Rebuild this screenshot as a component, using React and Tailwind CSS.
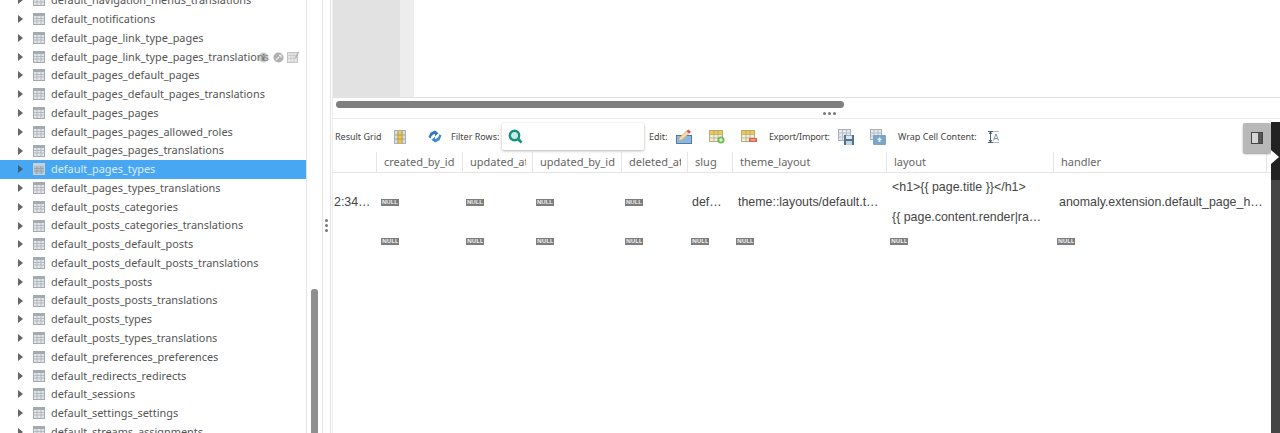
import React from 'react';

const tables = [
  'default_navigation_menus_translations', 'default_notifications', 'default_page_link_type_pages',
  'default_page_link_type_pages_translations', 'default_pages_default_pages', 'default_pages_default_pages_translations',
  'default_pages_pages', 'default_pages_pages_allowed_roles', 'default_pages_pages_translations', 'default_pages_types',
  'default_pages_types_translations', 'default_posts_categories', 'default_posts_categories_translations',
  'default_posts_default_posts', 'default_posts_default_posts_translations', 'default_posts_posts',
  'default_posts_posts_translations', 'default_posts_types', 'default_posts_types_translations',
  'default_preferences_preferences', 'default_redirects_redirects', 'default_sessions', 'default_settings_settings',
  'default_streams_assignments',
];

const columns = [
  { name: '', w: 'w-[44px]' },
  { name: 'created_by_id', w: 'w-[86px]' },
  { name: 'updated_at', w: 'w-[70px]' },
  { name: 'updated_by_id', w: 'w-[89px]' },
  { name: 'deleted_at', w: 'w-[66px]' },
  { name: 'slug', w: 'w-[45px]' },
  { name: 'theme_layout', w: 'w-[154px]' },
  { name: 'layout', w: 'w-[167px]' },
  { name: 'handler', w: 'w-[213px]' },
];

const TableIcon = ({ selected }) => (
  <svg width="12" height="12" viewBox="0 0 12 12" className="shrink-0">
    <rect width="12" height="12" fill={selected ? '#c5d2db' : '#a3aab0'} />
    <rect x="1" y="3" width="10" height="8" fill={selected ? '#b6c2cb' : '#e2e5e8'} />
    <path d="M1 5.500h10M1 8h10M4 3v8M8 3v8" stroke={selected ? '#8a9aa6' : '#a3aab0'} strokeWidth="0.7" />
  </svg>
);

const Row = ({ name, selected, hovered }) => (
  <div className={`flex items-center h-[18.78px] relative ${selected ? 'bg-[#48a7f2] text-[#dcecf9]' : 'text-[#555]'}`}>
    <span className={`ml-[18px] w-0 h-0 border-y-[4px] border-y-transparent border-l-[5px] ${selected ? 'border-l-[#3d5f78]' : 'border-l-[#666]'}`} />
    <span className="ml-[10px]"><TableIcon selected={selected} /></span>
    <span className="ml-[6px] whitespace-nowrap">{name}</span>
    {hovered && (
      <span className="absolute left-[258px] top-[4px] flex items-center">
        <svg width="11" height="11" viewBox="0 0 11 11"><circle cx="5.500" cy="5.500" r="5" fill="#aaa" opacity="0.6" /><rect x="4.500" y="4.500" width="2" height="4" fill="#777" /><rect x="4.500" y="2" width="2" height="1.500" fill="#777" /></svg>
        <svg width="11" height="11" viewBox="0 0 11 11" className="ml-[4px]"><circle cx="5.500" cy="5.500" r="5" fill="#b0b0b0" /><path d="M3 8l3-3M6 3.500h2v2" stroke="#eee" strokeWidth="1.300" fill="none" /></svg>
        <svg width="13" height="12" viewBox="0 0 13 12" className="ml-[3px]"><rect x="0.500" y="1.500" width="10" height="10" fill="#e6e6e6" stroke="#c4c4c4" /><path d="M1 4.500h9M1 7.500h9M4 2v9M7 2v9" stroke="#c4c4c4" strokeWidth="0.700" /><path d="M8.500 7l3-6" stroke="#b4b4b4" strokeWidth="1.500" /></svg>
      </span>
    )}
  </div>
);

const Null = () => (
  <span className="inline-flex items-center justify-center w-[18px] h-[7px] bg-[#7d7d7d] text-[#eee] text-[6px] leading-none font-bold">NULL</span>
);

const TBtn = ({ children, className }) => <span className={`shrink-0 flex items-center ${className}`}>{children}</span>;

const YellowGrid = () => (
  <>
    <rect x="0.500" y="0.500" width="13" height="11" fill="#f0efe6" stroke="#b8ab73" />
    <rect x="1" y="1" width="12" height="3.500" fill="#edc94f" />
    <path d="M1 4.500h12M1 8h12M5 1v10M9 1v10" stroke="#b8ab73" strokeWidth="0.800" />
  </>
);

const Toolbar = () => (
  <div className="h-[33px] pt-[2px] flex items-center text-[9px] text-[#444] relative whitespace-nowrap">
    <span className="ml-[2px] w-[47px]">Result Grid</span>
    <TBtn className="ml-[12px]">
      <svg width="12" height="14" viewBox="0 0 12 14"><rect x="0.500" y="0.500" width="11" height="13" fill="#d9dce0" stroke="#aab0b5" /><rect x="3.500" y="1" width="5" height="12" fill="#efc93f" /><path d="M4 1v12M8 1v12M1 5h10M1 9h10" stroke="#a09a70" strokeWidth="0.800" /></svg>
    </TBtn>
    <TBtn className="ml-[22px]">
      <svg width="14" height="13" viewBox="0 0 14 13"><path d="M7 .5L2.500 2.800 .5 7l2.200 1.500C3 6 4.500 4.300 7 4v2.200l3.500-3L7 .5z" fill="#2f76bd" /><path d="M13.500 5.500L11.300 4.200C11 6.800 9.500 8.700 7 9V6.800l-3.500 3L7 12.500l4.500-2.200 2-4.800z" fill="#3d8bd0" /></svg>
    </TBtn>
    <span className="ml-[9px] w-[49px]">Filter Rows:</span>
    <div className="ml-[2px] w-[142px] h-[27px] bg-white rounded-[2px] shadow-[0_1px_3px_rgba(0,0,0,0.3)] flex items-center">
      <svg width="15" height="15" viewBox="0 0 15 15" className="ml-[6px]"><circle cx="6.500" cy="6.500" r="4.700" fill="#c9ebe6" stroke="#17907f" strokeWidth="2.400" /><path d="M10 10l3.500 3.500" stroke="#17907f" strokeWidth="2.600" /></svg>
    </div>
    <span className="ml-[5px] w-[18px]">Edit:</span>
    <TBtn className="ml-[9px]">
      <svg width="16" height="15" viewBox="0 0 16 15"><rect x="0.500" y="6.500" width="15" height="8" fill="#8db8de" stroke="#4b7cab" /><path d="M2.500 12l1-3.500L10.500 2l2.500 2.500-7 6.500z" fill="#f3d9a8" stroke="#b89060" strokeWidth="0.500" /><path d="M10.500 2L12.500 .5 15 3l-2 1.500z" fill="#d9534f" /></svg>
    </TBtn>
    <TBtn className="ml-[17px]">
      <svg width="16" height="14" viewBox="0 0 16 14"><YellowGrid /><circle cx="12" cy="10" r="3.500" fill="#6dbb55" /><path d="M10 10h4M12 8v4" stroke="#fff" strokeWidth="1" /></svg>
    </TBtn>
    <TBtn className="ml-[16px]">
      <svg width="16" height="14" viewBox="0 0 16 14"><YellowGrid /><rect x="8" y="8" width="8" height="4" fill="#d9634a" /><rect x="9.500" y="9.500" width="5" height="1" fill="#f5d5cc" /></svg>
    </TBtn>
    <span className="ml-[12px] w-[60px] tracking-[-0.15px]">Export/Import:</span>
    <TBtn className="ml-[9px]">
      <svg width="16" height="16" viewBox="0 0 16 16"><rect x="0.500" y="0.500" width="12" height="11" fill="#e4e8ec" stroke="#a9b1b8" /><path d="M1 4h11M1 8h11M4.500 1v10M8.500 1v10" stroke="#a9b1b8" strokeWidth="0.700" /><rect x="6" y="6" width="10" height="10" fill="#4f7492" /><rect x="8" y="6.500" width="6" height="3.500" fill="#dfe8f0" /><rect x="8" y="12" width="6" height="4" fill="#c5d3df" /></svg>
    </TBtn>
    <TBtn className="ml-[16px]">
      <svg width="16" height="16" viewBox="0 0 16 16"><rect x="0.500" y="0.500" width="11" height="10" fill="#e4e8ec" stroke="#a9b1b8" /><path d="M1 4h10M1 7h10M4 1v9M8 1v9" stroke="#a9b1b8" strokeWidth="0.700" /><rect x="3" y="6" width="13" height="10" rx="1" fill="#7ba6c9" /><path d="M9.500 8l2.500 3h-5zM8.500 11v2h2v-2" fill="#dfeaf3" /></svg>
    </TBtn>
    <span className="ml-[12px] w-[79px]">Wrap Cell Content:</span>
    <TBtn className="ml-[11px]">
      <svg width="11" height="12" viewBox="0 0 11 12"><path d="M0 .5h5M0 11.500h5M2.500 1v10M1 3l1.500-2L4 3M1 9l1.500 2L4 9" stroke="#2f3a44" fill="none" strokeWidth="0.800" /><path d="M5 .5h6M5 11.500h6" stroke="#7f8b95" fill="none" strokeWidth="0.600" /><path d="M5.500 9.500L8 3l2.500 6.500M6.500 7.500h3" stroke="#5a7a96" fill="none" strokeWidth="0.800" /></svg>
    </TBtn>
    <div className="absolute left-[910px] top-[4px] w-[28px] h-[30px] bg-[#b8b8b8] rounded-[2px] shadow-[0_1px_2px_rgba(0,0,0,0.4)] flex items-center justify-center">
      <svg width="12" height="12" viewBox="0 0 12 12"><rect x="0.500" y="0.500" width="11" height="11" fill="#d4d4d4" stroke="#444" /><rect x="7" y="1" width="4" height="10" fill="#555" /></svg>
    </div>
  </div>
);

const Cell = ({ w, children, className = '' }) => (
  <div className={`${w} shrink-0 px-[5px] flex items-center overflow-hidden ${className}`}>{children}</div>
);

const Dots = () => (
  <>
    <span className="w-[3px] h-[3px] rounded-full bg-[#777]" />
    <span className="w-[3px] h-[3px] rounded-full bg-[#777]" />
    <span className="w-[3px] h-[3px] rounded-full bg-[#777]" />
  </>
);

export default function App() {
  return (
    <div className="h-[433px] w-[1280px] overflow-hidden flex bg-white font-['Noto_Sans',sans-serif] text-[10.9px]">
      <aside className="w-[323px] shrink-0 flex border-r border-[#e4e4e4]">
        <div className="w-[307px] shrink-0 border-r border-[#e4e4e4] -mt-[9px] h-[460px] overflow-hidden">
          {tables.map((t) => (
            <Row key={t} name={t} selected={t === 'default_pages_types'} hovered={t === 'default_page_link_type_pages_translations'} />
          ))}
        </div>
        <div className="flex-1 pt-[289px] pl-[4px]">
          <div className="w-[7px] h-[160px] rounded-t-[3px] bg-[#8f8f8f]" />
        </div>
      </aside>
      <div className="w-[8px] shrink-0 border-r border-[#e4e4e4] flex flex-col items-center justify-center gap-[2px] pt-[17px]">
        <Dots />
      </div>
      <div className="w-[2px] shrink-0 border-r border-[#ececec]" />
      <main className="flex-1 min-w-0">
        <div className="h-[98px] border-b border-[#e2e2e2] flex">
          <div className="w-[67px] bg-[#e2e2e2]" />
          <div className="w-[14px] bg-[#ededed]" />
        </div>
        <div className="h-[21px] pt-[3px] border-b border-[#ececec] relative">
          <div className="ml-[3px] w-[508px] h-[7px] rounded-full bg-[#7f7f7f]" />
          <div className="absolute left-[490px] top-[14px] flex gap-[2px]">
            <Dots />
          </div>
        </div>
        <div className="flex">
          <div className="w-[938px] shrink-0">
            <Toolbar />
            <div className="flex h-[21px] border-b border-[#e6e6e6] text-[#666] text-[11px]">
              {columns.map((c) => (
                <Cell key={c.name} w={c.w} className="border-r border-[#e6e6e6] !pl-[7px] !pr-[6px]">
                  <span className="block w-full overflow-hidden whitespace-nowrap">{c.name}</span>
                </Cell>
              ))}
            </div>
            <div className="flex h-[58px] font-['Liberation_Sans',sans-serif] text-[12.4px] text-[#444]">
              <Cell w="w-[44px]" className="!px-[1px]"><span className="whitespace-nowrap">2:34…</span></Cell>
              <Cell w="w-[86px]" className="!px-[4px]"><Null /></Cell>
              <Cell w="w-[70px]" className="!px-[3px]"><Null /></Cell>
              <Cell w="w-[89px]" className="!px-[3px]"><Null /></Cell>
              <Cell w="w-[66px]" className="!px-[3px]"><Null /></Cell>
              <Cell w="w-[45px]" className="!px-[4px]"><span>def…</span></Cell>
              <Cell w="w-[154px]"><span className="whitespace-nowrap">theme::layouts/default.t…</span></Cell>
              <Cell w="w-[167px]">
                <div className="flex flex-col gap-[11px] whitespace-nowrap">
                  <span>{'<h1>{{ page.title }}</h1>'}</span>
                  <span>{'{{ page.content.render|ra…'}</span>
                </div>
              </Cell>
              <Cell w="w-[213px]"><span className="whitespace-nowrap">anomaly.extension.default_page_h…</span></Cell>
            </div>
            <div className="flex h-[20px]">
              {columns.map((c, i) => (
                <Cell key={c.name} w={c.w} className={i === 1 ? '!px-[4px]' : '!px-[3px]'}>{c.name && <Null />}</Cell>
              ))}
            </div>
          </div>
          <div className="flex-1 flex flex-col">
            <div className="h-[3px]" />
            <div className="h-[58px] bg-[#222] relative">
              <span className="absolute left-0 top-[28px] w-0 h-0 border-y-[7px] border-y-transparent border-l-[8px] border-l-white" />
            </div>
            <div className="h-[300px] bg-[#454545]" />
          </div>
        </div>
      </main>
    </div>
  );
}
